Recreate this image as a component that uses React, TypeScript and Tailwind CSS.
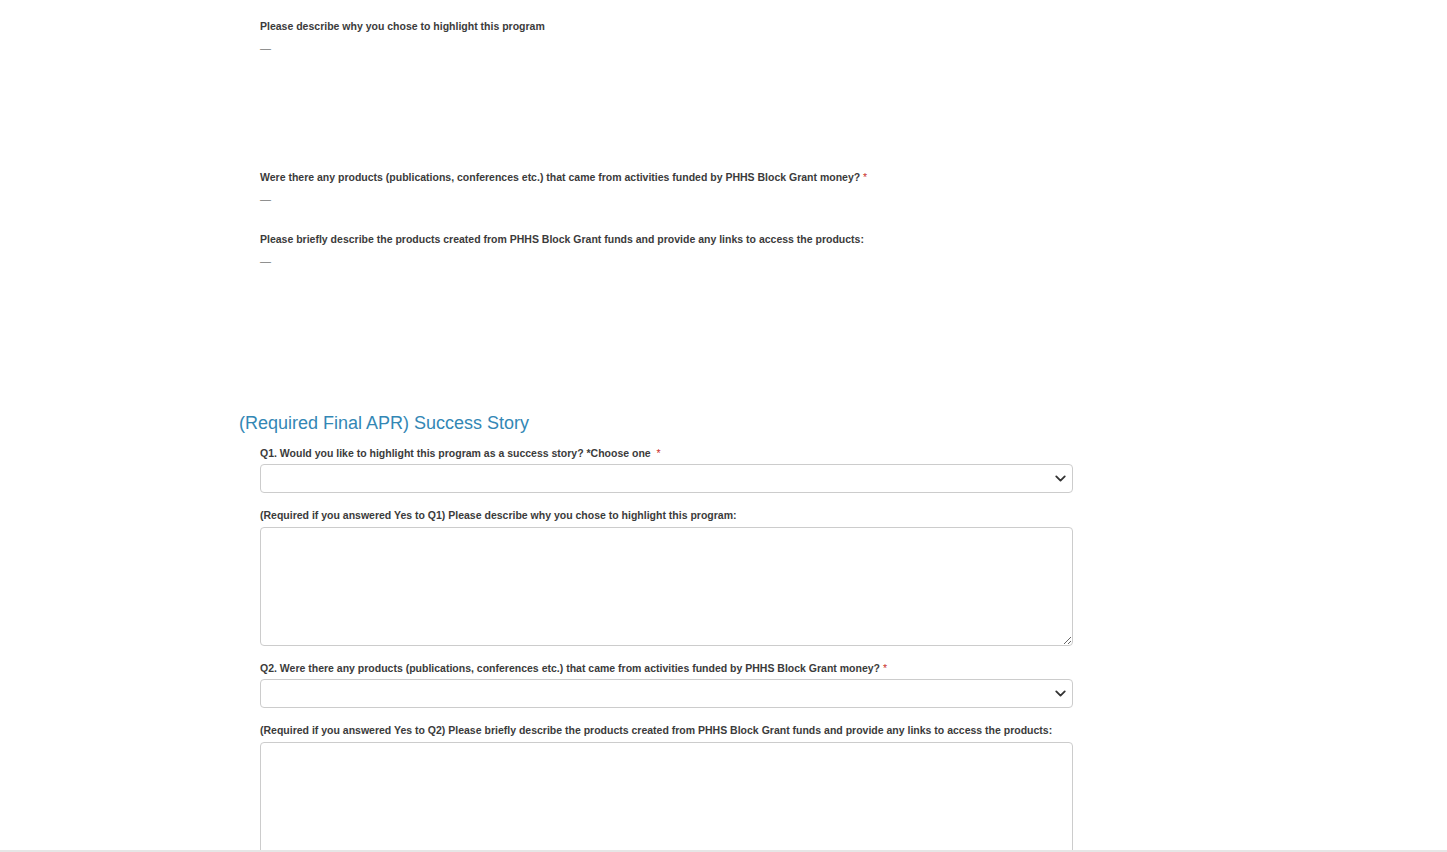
import { ChevronDown } from 'lucide-react'

const font = { fontFamily: '"Liberation Sans", Arial, sans-serif' }

function ReadOnlyField({ label, required, tall }: { label: string; required?: boolean; tall?: boolean }) {
  return (
    <div className={tall ? 'mb-[114px]' : 'mb-[25px]'}>
      <div className="text-[10.5px] font-bold leading-[15px] text-[#3b3b3b]">
        {label}
        {required && <span className="font-normal text-[#c9302c]"> *</span>}
      </div>
      <div className="mt-[7px] text-[11px] leading-[15px] text-[#777]">—</div>
    </div>
  )
}

function SelectBox() {
  return (
    <div className="flex h-[29px] w-full items-center justify-end rounded-[4px] border border-[#cccccc] bg-white pr-[3px]">
      <ChevronDown className="h-[17px] w-[17px] text-[#333]" strokeWidth={2.6} />
    </div>
  )
}

function Label({ children, gap }: { children: React.ReactNode; gap: string }) {
  return <div className={`${gap} text-[10.5px] font-bold leading-[15px] text-[#3b3b3b]`}>{children}</div>
}

function Star() {
  return <span className="font-normal text-[#c9302c]">*</span>
}

export default function App() {
  return (
    <div className="min-h-screen bg-white" style={font}>
      <div className="ml-[240px] w-[833px] pt-[19px]">
        <div className="pl-[20px]">
          <ReadOnlyField label="Please describe why you chose to highlight this program" tall />
          <ReadOnlyField
            label="Were there any products (publications, conferences etc.) that came from activities funded by PHHS Block Grant money?"
            required
          />
          <ReadOnlyField label="Please briefly describe the products created from PHHS Block Grant funds and provide any links to access the products:" />
        </div>

        <h2 className="-ml-px mt-[143px] text-[18px] leading-[22px] text-[#3387b5]">(Required Final APR) Success Story</h2>

        <div className="pl-[20px] pt-[12px]">
          <Label gap="mb-[3px]">
            Q1. Would you like to highlight this program as a success story? *Choose one &nbsp;<Star />
          </Label>
          <SelectBox />

          <div className="mt-[15px]">
            <Label gap="mb-[4px]">(Required if you answered Yes to Q1) Please describe why you chose to highlight this program:</Label>
            <textarea className="block h-[119px] w-full rounded-[4px] border border-[#cccccc] bg-white" />
          </div>

          <div className="mt-[15px]">
            <Label gap="mb-[3px]">
              Q2. Were there any products (publications, conferences etc.) that came from activities funded by PHHS Block Grant money? <Star />
            </Label>
            <SelectBox />
          </div>

          <div className="mt-[15px]">
            <Label gap="mb-[4px]">
              (Required if you answered Yes to Q2) Please briefly describe the products created from PHHS Block Grant funds and provide any links to access the products:
            </Label>
            <textarea className="block h-[119px] w-full rounded-[4px] border border-[#cccccc] bg-white" />
          </div>
        </div>
      </div>
      <div className="fixed bottom-0 left-0 h-[2px] w-full bg-[#e6e6e6]" />
    </div>
  )
}
